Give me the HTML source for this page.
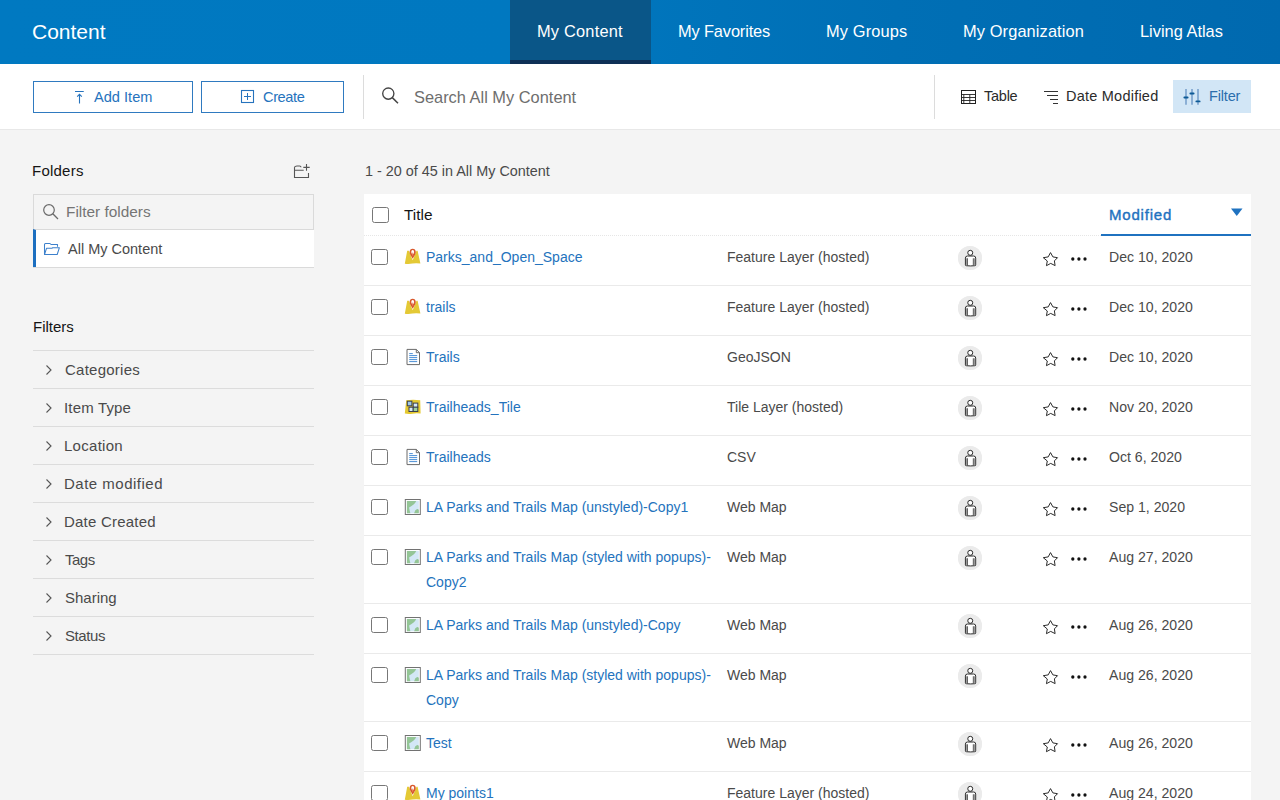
<!DOCTYPE html>
<html><head><meta charset="utf-8">
<style>
*{box-sizing:border-box;margin:0;padding:0}
svg{display:block}
html,body{width:1280px;height:800px;overflow:hidden;background:#f4f4f4;font-family:"Liberation Sans",sans-serif;color:#4a4a4a}
.abs{position:absolute}
#hdr{position:absolute;left:0;top:0;width:1280px;height:64px;background:linear-gradient(90deg,#0079c1 0%,#0078c0 40%,#006fb5 70%,#0069af 100%)}
#hdr .title{position:absolute;left:32px;top:18.7px;font-size:21px;color:#fff;line-height:26px}
.tab{position:absolute;top:0;height:64px;color:#fff;font-size:16.4px;line-height:62px;white-space:nowrap}
.tab.active{background:#0a5688;border-bottom:4px solid #0e3056}
#tb{position:absolute;left:0;top:64px;width:1280px;height:66px;background:#fff;border-bottom:1px solid #e8e8e8}
.btn{position:absolute;top:17px;height:32px;border:1px solid #2f7ac0;color:#2673bd;font-size:14.6px;line-height:30px}
.vdiv{position:absolute;top:11px;width:1px;height:44px;background:#dcdcdc}
.tbtxt{position:absolute;font-size:14.5px;color:#2b2b2b;line-height:18px}
#side{position:absolute;left:33px;top:0}
.sh{position:absolute;font-size:15px;color:#151515;line-height:18px}
.frow{position:absolute;left:33px;width:281px;height:38px;border-bottom:1px solid #dcdcdc}
.frow .lbl{position:absolute;left:32px;top:10px;font-size:15px;color:#4a4a4a;line-height:18px}
.frow svg{position:absolute;left:12px;top:13px}
#tbl{position:absolute;left:364px;top:194px;width:887px;height:620px;background:#fff}
.row{position:absolute;left:0;width:887px;border-bottom:1px solid #eaeaea}
.cb{position:absolute;width:16.5px;height:16px;border:1.3px solid #777;border-radius:2.5px;background:#fff}
.ttl{position:absolute;left:62px;font-size:14px;color:#2473bd;line-height:25px;white-space:nowrap}
.typ{position:absolute;left:363px;font-size:14px;color:#4a4a4a;line-height:18px;white-space:nowrap}
.dt{position:absolute;left:745px;font-size:14.1px;color:#4a4a4a;line-height:18px;white-space:nowrap}
.ico{position:absolute;left:40px}
.share{position:absolute;left:594px;width:24px;height:24px;border-radius:12px;background:#ececec}
.star{position:absolute;left:678px}
.dots{position:absolute;left:707px}
</style></head>
<body>
<div id="hdr">
  <div class="title">Content</div>
  <div class="tab active" style="left:510px;width:141px;padding-left:27px;letter-spacing:0.2px">My Content</div>
  <div class="tab" style="left:678px;letter-spacing:-0.14px">My Favorites</div>
  <div class="tab" style="left:826px;letter-spacing:0.12px">My Groups</div>
  <div class="tab" style="left:963px;letter-spacing:0.11px">My Organization</div>
  <div class="tab" style="left:1140px">Living Atlas</div>
</div>
<div id="tb">
  <div class="btn" style="left:33px;width:160px"><span class="abs" style="left:60px;top:0">Add Item</span></div>
  <div class="btn" style="left:201px;width:143px"><span class="abs" style="left:61px;top:0;letter-spacing:-0.4px">Create</span></div>
  <div class="vdiv" style="left:363px"></div>
  <div class="abs" style="left:414px;top:23px;font-size:16.4px;color:#6e6e6e;line-height:20px">Search All My Content</div>
  <div class="vdiv" style="left:934px"></div>
  <div class="abs" style="left:1173px;top:16px;width:78px;height:33px;background:#d2e6f6"></div>

  
  <svg class="abs" style="left:72px;top:24px" width="16" height="18" viewBox="0 0 16 18"><path d="M3 3.5 H11.75 M7.5 15.6 V6.5 M5.2 8.6 L7.5 6.3 L9.8 8.6" fill="none" stroke="#2673bd" stroke-width="1.1"/></svg>
  <svg class="abs" style="left:238px;top:24px" width="18" height="18" viewBox="0 0 18 18"><rect x="3.5" y="2.5" width="12" height="12" fill="none" stroke="#2673bd" stroke-width="1.1"/><path d="M9.5 5 V12 M6 8.5 H13" stroke="#2673bd" stroke-width="1"/></svg>
  <svg class="abs" style="left:381px;top:22px" width="19" height="19" viewBox="0 0 19 19"><circle cx="7.3" cy="7.6" r="5.6" fill="none" stroke="#444" stroke-width="1.35"/><path d="M11.3 11.6 L17 17.2" stroke="#444" stroke-width="1.5"/></svg>
  <svg class="abs" style="left:960px;top:25px" width="18" height="16" viewBox="0 0 18 16"><rect x="1.5" y="1.5" width="14" height="13" fill="none" stroke="#222" stroke-width="1"/><path d="M1.5 5.5 H15.5 M1.5 8.5 H15.5 M1.5 11.5 H15.5 M3.8 5.5 V14.5 M9.8 5.5 V14.5" stroke="#222" stroke-width="0.9"/></svg>
  <svg class="abs" style="left:1043px;top:25px" width="16" height="16" viewBox="0 0 16 16"><path d="M1 2.5 H15 M4 6.5 H15 M7 10.5 H15 M10 14.5 H15" stroke="#333" stroke-width="1.2"/></svg>
  <svg class="abs" style="left:1183px;top:24px" width="18" height="18" viewBox="0 0 18 18"><path d="M3 1 V16.7 M9 1 V16.7 M15 1 V16.7" stroke="#7fa5cf" stroke-width="1.7"/><path d="M1.4 9.5 H4.6 M7.4 5.5 H10.6 M13.4 13.4 H16.6" stroke="#0d5a96" stroke-width="1.9" stroke-linecap="round"/></svg>
  <div class="tbtxt" style="left:984px;top:23px;letter-spacing:-0.25px">Table</div>
  <div class="tbtxt" style="left:1066px;top:23px;letter-spacing:0.23px">Date Modified</div>
  <div class="tbtxt" style="left:1209px;top:23px;color:#2b6ead;letter-spacing:-0.16px">Filter</div>
</div>

<div class="sh" style="left:32px;top:162px;letter-spacing:0.23px">Folders</div>
<div class="abs" style="left:33px;top:194px;width:281px;height:74px;border:1px solid #dadada;background:#f4f4f4"></div>
<div class="abs" style="left:66px;top:203px;font-size:15.4px;color:#757575;line-height:18px">Filter folders</div>
<div class="abs" style="left:33px;top:229px;width:281px;height:38px;background:#fff;border-left:3px solid #1c6fc0;border-top:1px solid #dadada"></div>
<div class="abs" style="left:68px;top:240px;font-size:14.5px;color:#4a4a4a;line-height:18px">All My Content</div>


<svg class="abs" style="left:292px;top:162px" width="20" height="18" viewBox="0 0 20 18"><path d="M2.5 5.2 V15.5 H16.5 V11 M2.5 8.3 H11.7 M2.5 5.2 Q3 4.3 5 4 H7.6 Q9 4 9 5.2 M14.5 2 V8.7 M11.3 5.4 H17.7" fill="none" stroke="#555" stroke-width="1.1"/></svg>
<svg class="abs" style="left:42px;top:203px" width="18" height="18" viewBox="0 0 18 18"><circle cx="7" cy="7" r="5.3" fill="none" stroke="#6b6b6b" stroke-width="1.2"/><path d="M10.8 10.8 L16 16" stroke="#6b6b6b" stroke-width="1.3"/></svg>
<svg class="abs" style="left:40px;top:240px" width="22" height="18" viewBox="0 0 22 18"><path d="M4.5 14.5 V4.5 Q4.5 3.5 5.5 3.5 H10 L11 4.5 H17.5 V6.7 M4.5 14.5 L6.5 8.3 H12 L12.6 7.7 H19.4 L17.2 14.5 Z" fill="none" stroke="#3c80cc" stroke-width="1.05" stroke-linejoin="round"/></svg>
<div class="sh" style="left:33px;top:318px">Filters</div>
<div class="abs" style="left:33px;top:350px;width:281px;height:1px;background:#dcdcdc"></div>
<div class="frow" style="top:351px"><svg width="8" height="12" viewBox="0 0 8 12"><path d="M1.5 1.5 L6 6 L1.5 10.5" fill="none" stroke="#555" stroke-width="1.1"/></svg><div class="lbl" style="letter-spacing:0.25px">Categories</div></div>
<div class="frow" style="top:389px"><svg width="8" height="12" viewBox="0 0 8 12"><path d="M1.5 1.5 L6 6 L1.5 10.5" fill="none" stroke="#555" stroke-width="1.1"/></svg><div class="lbl" style="letter-spacing:0.17px;left:31px">Item Type</div></div>
<div class="frow" style="top:427px"><svg width="8" height="12" viewBox="0 0 8 12"><path d="M1.5 1.5 L6 6 L1.5 10.5" fill="none" stroke="#555" stroke-width="1.1"/></svg><div class="lbl" style="left:31px;letter-spacing:0.28px">Location</div></div>
<div class="frow" style="top:465px"><svg width="8" height="12" viewBox="0 0 8 12"><path d="M1.5 1.5 L6 6 L1.5 10.5" fill="none" stroke="#555" stroke-width="1.1"/></svg><div class="lbl" style="left:31px;letter-spacing:0.5px">Date modified</div></div>
<div class="frow" style="top:503px"><svg width="8" height="12" viewBox="0 0 8 12"><path d="M1.5 1.5 L6 6 L1.5 10.5" fill="none" stroke="#555" stroke-width="1.1"/></svg><div class="lbl" style="left:31px;letter-spacing:0.22px">Date Created</div></div>
<div class="frow" style="top:541px"><svg width="8" height="12" viewBox="0 0 8 12"><path d="M1.5 1.5 L6 6 L1.5 10.5" fill="none" stroke="#555" stroke-width="1.1"/></svg><div class="lbl" style="letter-spacing:-0.5px">Tags</div></div>
<div class="frow" style="top:579px"><svg width="8" height="12" viewBox="0 0 8 12"><path d="M1.5 1.5 L6 6 L1.5 10.5" fill="none" stroke="#555" stroke-width="1.1"/></svg><div class="lbl">Sharing</div></div>
<div class="frow" style="top:617px"><svg width="8" height="12" viewBox="0 0 8 12"><path d="M1.5 1.5 L6 6 L1.5 10.5" fill="none" stroke="#555" stroke-width="1.1"/></svg><div class="lbl" style="letter-spacing:-0.4px">Status</div></div>

<div class="abs" style="left:365px;top:162px;font-size:14.4px;color:#4a4a4a;line-height:18px">1 - 20 of 45 in All My Content</div>

<div id="tbl"><!--TBL--><div class="row" style="top:0;height:42px;border-bottom:1px dotted #e6e6e6"><div class="cb" style="left:8px;top:13px"></div><div class="abs" style="left:40px;top:12px;font-size:15.4px;color:#151515;line-height:18px">Title</div><div class="abs" style="left:737px;top:40px;width:150px;height:2px;background:#1f72c0"></div><div class="abs" style="left:745px;top:11.5px;font-size:15px;color:#1f72c0;line-height:18px;letter-spacing:0.8px;-webkit-text-stroke:0.4px #1f72c0">Modified</div><svg class="abs" style="left:867px;top:14px" width="12" height="9" viewBox="0 0 12 9"><path d="M0 0.5 H11.5 L5.75 8 Z" fill="#1f72c0"/></svg></div>
<div class="row" style="top:42px;height:50px"><div class="cb" style="left:7.3px;top:13px"></div><div class="ico" style="top:12px"><svg width="18" height="18" viewBox="0 0 18 18"><path d="M3.2 2.7 L4.9 2.7 L8.7 12.3 L12.5 2.7 L13.6 2.7 L16.4 15.6 Q12 14.8 8.5 15.6 Q4.5 16.4 0.8 15.7 Z" fill="#e4c935"/><path d="M8.7 0.7 C6.9 0.7 5.6 1.9 5.6 4.1 C5.6 6.4 7.4 8.4 8.7 10.8 C10 8.4 11.8 6.4 11.8 4.1 C11.8 1.9 10.5 0.7 8.7 0.7 Z" fill="#d9582c"/><ellipse cx="8.7" cy="4.1" rx="1.45" ry="2.1" fill="#fff"/><path d="M8.7 4.6 V7.6" stroke="#e88a6a" stroke-width="1"/></svg></div><div class="ttl" style="top:9px">Parks_and_Open_Space</div><div class="typ" style="top:12px">Feature Layer (hosted)</div><div class="share" style="top:10px"><svg width="24" height="24" viewBox="0 0 24 24"><circle cx="12" cy="12" r="12" fill="#ebebeb"/><circle cx="12.25" cy="6.8" r="2.5" fill="#fff" stroke="#2b2b2b" stroke-width="1"/><path d="M7.4 18.9 V12.1 Q7.4 10 9.5 10 H15.6 Q17.7 10 17.7 12.1 V18.9 Q17.7 19.7 16.9 19.7 Q12.5 20.2 8.2 19.7 Q7.4 19.7 7.4 18.9 Z" fill="#fff" stroke="#2b2b2b" stroke-width="1"/><path d="M8 12.3 H9.3 V19.2 H8 Z M15.5 12.3 H17.1 V19.2 H15.5 Z" fill="#9a9a9a"/><path d="M9.5 12.3 V19.3 M15.3 12.3 V19.3" stroke="#2b2b2b" stroke-width="0.7"/></svg></div><div class="star" style="top:13.7px"><svg width="18" height="18" viewBox="0 0 18 18"><path d="M8.5 2.6 L10.9 6.9 L15.5 7.7 L12.4 10.9 L13.1 15.6 L8.7 13.4 L4.45 15.7 L5.3 11 L1.3 7.7 L6.2 6.9 Z" fill="none" stroke="#2b2b2b" stroke-width="1" stroke-linejoin="miter"/></svg></div><div class="dots" style="top:20px"><svg width="18" height="6" viewBox="0 0 18 6"><circle cx="1.8" cy="3" r="1.65" fill="#111"/><circle cx="7.9" cy="3" r="1.65" fill="#111"/><circle cx="14" cy="3" r="1.65" fill="#111"/></svg></div><div class="dt" style="top:12px">Dec 10, 2020</div></div>
<div class="row" style="top:92px;height:50px"><div class="cb" style="left:7.3px;top:13px"></div><div class="ico" style="top:12px"><svg width="18" height="18" viewBox="0 0 18 18"><path d="M3.2 2.7 L4.9 2.7 L8.7 12.3 L12.5 2.7 L13.6 2.7 L16.4 15.6 Q12 14.8 8.5 15.6 Q4.5 16.4 0.8 15.7 Z" fill="#e4c935"/><path d="M8.7 0.7 C6.9 0.7 5.6 1.9 5.6 4.1 C5.6 6.4 7.4 8.4 8.7 10.8 C10 8.4 11.8 6.4 11.8 4.1 C11.8 1.9 10.5 0.7 8.7 0.7 Z" fill="#d9582c"/><ellipse cx="8.7" cy="4.1" rx="1.45" ry="2.1" fill="#fff"/><path d="M8.7 4.6 V7.6" stroke="#e88a6a" stroke-width="1"/></svg></div><div class="ttl" style="top:9px">trails</div><div class="typ" style="top:12px">Feature Layer (hosted)</div><div class="share" style="top:10px"><svg width="24" height="24" viewBox="0 0 24 24"><circle cx="12" cy="12" r="12" fill="#ebebeb"/><circle cx="12.25" cy="6.8" r="2.5" fill="#fff" stroke="#2b2b2b" stroke-width="1"/><path d="M7.4 18.9 V12.1 Q7.4 10 9.5 10 H15.6 Q17.7 10 17.7 12.1 V18.9 Q17.7 19.7 16.9 19.7 Q12.5 20.2 8.2 19.7 Q7.4 19.7 7.4 18.9 Z" fill="#fff" stroke="#2b2b2b" stroke-width="1"/><path d="M8 12.3 H9.3 V19.2 H8 Z M15.5 12.3 H17.1 V19.2 H15.5 Z" fill="#9a9a9a"/><path d="M9.5 12.3 V19.3 M15.3 12.3 V19.3" stroke="#2b2b2b" stroke-width="0.7"/></svg></div><div class="star" style="top:13.7px"><svg width="18" height="18" viewBox="0 0 18 18"><path d="M8.5 2.6 L10.9 6.9 L15.5 7.7 L12.4 10.9 L13.1 15.6 L8.7 13.4 L4.45 15.7 L5.3 11 L1.3 7.7 L6.2 6.9 Z" fill="none" stroke="#2b2b2b" stroke-width="1" stroke-linejoin="miter"/></svg></div><div class="dots" style="top:20px"><svg width="18" height="6" viewBox="0 0 18 6"><circle cx="1.8" cy="3" r="1.65" fill="#111"/><circle cx="7.9" cy="3" r="1.65" fill="#111"/><circle cx="14" cy="3" r="1.65" fill="#111"/></svg></div><div class="dt" style="top:12px">Dec 10, 2020</div></div>
<div class="row" style="top:142px;height:50px"><div class="cb" style="left:7.3px;top:13px"></div><div class="ico" style="top:12px"><svg width="18" height="18" viewBox="0 0 18 18"><path d="M3 1.4 H12.3 L15.5 4.7 V16.6 H3 Z" fill="#fff" stroke="#6b6b6b" stroke-width="1"/><path d="M12.3 1.4 V4.7 H15.5" fill="none" stroke="#6b6b6b" stroke-width="1"/><path d="M5.2 5.6 H8.8 M5.2 7.6 H13.2 M5.2 9.6 H13.2 M5.2 11.6 H13.2 M5.2 13.6 H13.2" stroke="#4b8fd6" stroke-width="1"/></svg></div><div class="ttl" style="top:9px">Trails</div><div class="typ" style="top:12px">GeoJSON</div><div class="share" style="top:10px"><svg width="24" height="24" viewBox="0 0 24 24"><circle cx="12" cy="12" r="12" fill="#ebebeb"/><circle cx="12.25" cy="6.8" r="2.5" fill="#fff" stroke="#2b2b2b" stroke-width="1"/><path d="M7.4 18.9 V12.1 Q7.4 10 9.5 10 H15.6 Q17.7 10 17.7 12.1 V18.9 Q17.7 19.7 16.9 19.7 Q12.5 20.2 8.2 19.7 Q7.4 19.7 7.4 18.9 Z" fill="#fff" stroke="#2b2b2b" stroke-width="1"/><path d="M8 12.3 H9.3 V19.2 H8 Z M15.5 12.3 H17.1 V19.2 H15.5 Z" fill="#9a9a9a"/><path d="M9.5 12.3 V19.3 M15.3 12.3 V19.3" stroke="#2b2b2b" stroke-width="0.7"/></svg></div><div class="star" style="top:13.7px"><svg width="18" height="18" viewBox="0 0 18 18"><path d="M8.5 2.6 L10.9 6.9 L15.5 7.7 L12.4 10.9 L13.1 15.6 L8.7 13.4 L4.45 15.7 L5.3 11 L1.3 7.7 L6.2 6.9 Z" fill="none" stroke="#2b2b2b" stroke-width="1" stroke-linejoin="miter"/></svg></div><div class="dots" style="top:20px"><svg width="18" height="6" viewBox="0 0 18 6"><circle cx="1.8" cy="3" r="1.65" fill="#111"/><circle cx="7.9" cy="3" r="1.65" fill="#111"/><circle cx="14" cy="3" r="1.65" fill="#111"/></svg></div><div class="dt" style="top:12px">Dec 10, 2020</div></div>
<div class="row" style="top:192px;height:50px"><div class="cb" style="left:7.3px;top:13px"></div><div class="ico" style="top:12px"><svg width="18" height="18" viewBox="0 0 18 18"><path d="M2.2 2.3 Q9 1.2 16.2 2.3 L16.6 15.6 Q12 14.9 8.5 15.7 Q4.5 16.3 0.8 15.6 Z" fill="#e5c930"/><rect x="3.3" y="3.2" width="4.6" height="4.6" fill="#9fc8e8" stroke="#3b3f50" stroke-width="1"/><rect x="9.2" y="5.1" width="4.6" height="4.2" fill="#d5e8f7" stroke="#3b3f50" stroke-width="1"/><rect x="5" y="9.2" width="4.2" height="4.3" fill="#d5e8f7" stroke="#3b3f50" stroke-width="1"/><rect x="9.2" y="9.2" width="4.6" height="4.3" fill="#9fd09a" stroke="#3b3f50" stroke-width="1"/></svg></div><div class="ttl" style="top:9px">Trailheads_Tile</div><div class="typ" style="top:12px">Tile Layer (hosted)</div><div class="share" style="top:10px"><svg width="24" height="24" viewBox="0 0 24 24"><circle cx="12" cy="12" r="12" fill="#ebebeb"/><circle cx="12.25" cy="6.8" r="2.5" fill="#fff" stroke="#2b2b2b" stroke-width="1"/><path d="M7.4 18.9 V12.1 Q7.4 10 9.5 10 H15.6 Q17.7 10 17.7 12.1 V18.9 Q17.7 19.7 16.9 19.7 Q12.5 20.2 8.2 19.7 Q7.4 19.7 7.4 18.9 Z" fill="#fff" stroke="#2b2b2b" stroke-width="1"/><path d="M8 12.3 H9.3 V19.2 H8 Z M15.5 12.3 H17.1 V19.2 H15.5 Z" fill="#9a9a9a"/><path d="M9.5 12.3 V19.3 M15.3 12.3 V19.3" stroke="#2b2b2b" stroke-width="0.7"/></svg></div><div class="star" style="top:13.7px"><svg width="18" height="18" viewBox="0 0 18 18"><path d="M8.5 2.6 L10.9 6.9 L15.5 7.7 L12.4 10.9 L13.1 15.6 L8.7 13.4 L4.45 15.7 L5.3 11 L1.3 7.7 L6.2 6.9 Z" fill="none" stroke="#2b2b2b" stroke-width="1" stroke-linejoin="miter"/></svg></div><div class="dots" style="top:20px"><svg width="18" height="6" viewBox="0 0 18 6"><circle cx="1.8" cy="3" r="1.65" fill="#111"/><circle cx="7.9" cy="3" r="1.65" fill="#111"/><circle cx="14" cy="3" r="1.65" fill="#111"/></svg></div><div class="dt" style="top:12px">Nov 20, 2020</div></div>
<div class="row" style="top:242px;height:50px"><div class="cb" style="left:7.3px;top:13px"></div><div class="ico" style="top:12px"><svg width="18" height="18" viewBox="0 0 18 18"><path d="M3 1.4 H12.3 L15.5 4.7 V16.6 H3 Z" fill="#fff" stroke="#6b6b6b" stroke-width="1"/><path d="M12.3 1.4 V4.7 H15.5" fill="none" stroke="#6b6b6b" stroke-width="1"/><path d="M5.2 5.6 H8.8 M5.2 7.6 H13.2 M5.2 9.6 H13.2 M5.2 11.6 H13.2 M5.2 13.6 H13.2" stroke="#4b8fd6" stroke-width="1"/></svg></div><div class="ttl" style="top:9px">Trailheads</div><div class="typ" style="top:12px">CSV</div><div class="share" style="top:10px"><svg width="24" height="24" viewBox="0 0 24 24"><circle cx="12" cy="12" r="12" fill="#ebebeb"/><circle cx="12.25" cy="6.8" r="2.5" fill="#fff" stroke="#2b2b2b" stroke-width="1"/><path d="M7.4 18.9 V12.1 Q7.4 10 9.5 10 H15.6 Q17.7 10 17.7 12.1 V18.9 Q17.7 19.7 16.9 19.7 Q12.5 20.2 8.2 19.7 Q7.4 19.7 7.4 18.9 Z" fill="#fff" stroke="#2b2b2b" stroke-width="1"/><path d="M8 12.3 H9.3 V19.2 H8 Z M15.5 12.3 H17.1 V19.2 H15.5 Z" fill="#9a9a9a"/><path d="M9.5 12.3 V19.3 M15.3 12.3 V19.3" stroke="#2b2b2b" stroke-width="0.7"/></svg></div><div class="star" style="top:13.7px"><svg width="18" height="18" viewBox="0 0 18 18"><path d="M8.5 2.6 L10.9 6.9 L15.5 7.7 L12.4 10.9 L13.1 15.6 L8.7 13.4 L4.45 15.7 L5.3 11 L1.3 7.7 L6.2 6.9 Z" fill="none" stroke="#2b2b2b" stroke-width="1" stroke-linejoin="miter"/></svg></div><div class="dots" style="top:20px"><svg width="18" height="6" viewBox="0 0 18 6"><circle cx="1.8" cy="3" r="1.65" fill="#111"/><circle cx="7.9" cy="3" r="1.65" fill="#111"/><circle cx="14" cy="3" r="1.65" fill="#111"/></svg></div><div class="dt" style="top:12px">Oct 6, 2020</div></div>
<div class="row" style="top:292px;height:50px"><div class="cb" style="left:7.3px;top:13px"></div><div class="ico" style="top:12px"><svg width="18" height="18" viewBox="0 0 18 18"><rect x="1.3" y="1.5" width="15" height="15" fill="#fff" stroke="#727272" stroke-width="1"/><rect x="2.9" y="2.9" width="11.9" height="12.3" fill="#d3e7f6"/><path d="M2.9 2.9 H12.2 Q11.2 5.2 9.6 6.6 Q7 8.4 5.1 9.6 Q5.5 12.5 6.4 15.2 H2.9 Z" fill="#94c596"/><path d="M10.1 15.2 Q11 11.6 13.2 11 Q14.4 11.1 14.8 12 V15.2 Z" fill="#94c596"/></svg></div><div class="ttl" style="top:9px">LA Parks and Trails Map (unstyled)-Copy1</div><div class="typ" style="top:12px">Web Map</div><div class="share" style="top:10px"><svg width="24" height="24" viewBox="0 0 24 24"><circle cx="12" cy="12" r="12" fill="#ebebeb"/><circle cx="12.25" cy="6.8" r="2.5" fill="#fff" stroke="#2b2b2b" stroke-width="1"/><path d="M7.4 18.9 V12.1 Q7.4 10 9.5 10 H15.6 Q17.7 10 17.7 12.1 V18.9 Q17.7 19.7 16.9 19.7 Q12.5 20.2 8.2 19.7 Q7.4 19.7 7.4 18.9 Z" fill="#fff" stroke="#2b2b2b" stroke-width="1"/><path d="M8 12.3 H9.3 V19.2 H8 Z M15.5 12.3 H17.1 V19.2 H15.5 Z" fill="#9a9a9a"/><path d="M9.5 12.3 V19.3 M15.3 12.3 V19.3" stroke="#2b2b2b" stroke-width="0.7"/></svg></div><div class="star" style="top:13.7px"><svg width="18" height="18" viewBox="0 0 18 18"><path d="M8.5 2.6 L10.9 6.9 L15.5 7.7 L12.4 10.9 L13.1 15.6 L8.7 13.4 L4.45 15.7 L5.3 11 L1.3 7.7 L6.2 6.9 Z" fill="none" stroke="#2b2b2b" stroke-width="1" stroke-linejoin="miter"/></svg></div><div class="dots" style="top:20px"><svg width="18" height="6" viewBox="0 0 18 6"><circle cx="1.8" cy="3" r="1.65" fill="#111"/><circle cx="7.9" cy="3" r="1.65" fill="#111"/><circle cx="14" cy="3" r="1.65" fill="#111"/></svg></div><div class="dt" style="top:12px">Sep 1, 2020</div></div>
<div class="row" style="top:342px;height:68px"><div class="cb" style="left:7.3px;top:13px"></div><div class="ico" style="top:12px"><svg width="18" height="18" viewBox="0 0 18 18"><rect x="1.3" y="1.5" width="15" height="15" fill="#fff" stroke="#727272" stroke-width="1"/><rect x="2.9" y="2.9" width="11.9" height="12.3" fill="#d3e7f6"/><path d="M2.9 2.9 H12.2 Q11.2 5.2 9.6 6.6 Q7 8.4 5.1 9.6 Q5.5 12.5 6.4 15.2 H2.9 Z" fill="#94c596"/><path d="M10.1 15.2 Q11 11.6 13.2 11 Q14.4 11.1 14.8 12 V15.2 Z" fill="#94c596"/></svg></div><div class="ttl" style="top:9px">LA Parks and Trails Map (styled with popups)-<br>Copy2</div><div class="typ" style="top:12px">Web Map</div><div class="share" style="top:10px"><svg width="24" height="24" viewBox="0 0 24 24"><circle cx="12" cy="12" r="12" fill="#ebebeb"/><circle cx="12.25" cy="6.8" r="2.5" fill="#fff" stroke="#2b2b2b" stroke-width="1"/><path d="M7.4 18.9 V12.1 Q7.4 10 9.5 10 H15.6 Q17.7 10 17.7 12.1 V18.9 Q17.7 19.7 16.9 19.7 Q12.5 20.2 8.2 19.7 Q7.4 19.7 7.4 18.9 Z" fill="#fff" stroke="#2b2b2b" stroke-width="1"/><path d="M8 12.3 H9.3 V19.2 H8 Z M15.5 12.3 H17.1 V19.2 H15.5 Z" fill="#9a9a9a"/><path d="M9.5 12.3 V19.3 M15.3 12.3 V19.3" stroke="#2b2b2b" stroke-width="0.7"/></svg></div><div class="star" style="top:13.7px"><svg width="18" height="18" viewBox="0 0 18 18"><path d="M8.5 2.6 L10.9 6.9 L15.5 7.7 L12.4 10.9 L13.1 15.6 L8.7 13.4 L4.45 15.7 L5.3 11 L1.3 7.7 L6.2 6.9 Z" fill="none" stroke="#2b2b2b" stroke-width="1" stroke-linejoin="miter"/></svg></div><div class="dots" style="top:20px"><svg width="18" height="6" viewBox="0 0 18 6"><circle cx="1.8" cy="3" r="1.65" fill="#111"/><circle cx="7.9" cy="3" r="1.65" fill="#111"/><circle cx="14" cy="3" r="1.65" fill="#111"/></svg></div><div class="dt" style="top:12px">Aug 27, 2020</div></div>
<div class="row" style="top:410px;height:50px"><div class="cb" style="left:7.3px;top:13px"></div><div class="ico" style="top:12px"><svg width="18" height="18" viewBox="0 0 18 18"><rect x="1.3" y="1.5" width="15" height="15" fill="#fff" stroke="#727272" stroke-width="1"/><rect x="2.9" y="2.9" width="11.9" height="12.3" fill="#d3e7f6"/><path d="M2.9 2.9 H12.2 Q11.2 5.2 9.6 6.6 Q7 8.4 5.1 9.6 Q5.5 12.5 6.4 15.2 H2.9 Z" fill="#94c596"/><path d="M10.1 15.2 Q11 11.6 13.2 11 Q14.4 11.1 14.8 12 V15.2 Z" fill="#94c596"/></svg></div><div class="ttl" style="top:9px">LA Parks and Trails Map (unstyled)-Copy</div><div class="typ" style="top:12px">Web Map</div><div class="share" style="top:10px"><svg width="24" height="24" viewBox="0 0 24 24"><circle cx="12" cy="12" r="12" fill="#ebebeb"/><circle cx="12.25" cy="6.8" r="2.5" fill="#fff" stroke="#2b2b2b" stroke-width="1"/><path d="M7.4 18.9 V12.1 Q7.4 10 9.5 10 H15.6 Q17.7 10 17.7 12.1 V18.9 Q17.7 19.7 16.9 19.7 Q12.5 20.2 8.2 19.7 Q7.4 19.7 7.4 18.9 Z" fill="#fff" stroke="#2b2b2b" stroke-width="1"/><path d="M8 12.3 H9.3 V19.2 H8 Z M15.5 12.3 H17.1 V19.2 H15.5 Z" fill="#9a9a9a"/><path d="M9.5 12.3 V19.3 M15.3 12.3 V19.3" stroke="#2b2b2b" stroke-width="0.7"/></svg></div><div class="star" style="top:13.7px"><svg width="18" height="18" viewBox="0 0 18 18"><path d="M8.5 2.6 L10.9 6.9 L15.5 7.7 L12.4 10.9 L13.1 15.6 L8.7 13.4 L4.45 15.7 L5.3 11 L1.3 7.7 L6.2 6.9 Z" fill="none" stroke="#2b2b2b" stroke-width="1" stroke-linejoin="miter"/></svg></div><div class="dots" style="top:20px"><svg width="18" height="6" viewBox="0 0 18 6"><circle cx="1.8" cy="3" r="1.65" fill="#111"/><circle cx="7.9" cy="3" r="1.65" fill="#111"/><circle cx="14" cy="3" r="1.65" fill="#111"/></svg></div><div class="dt" style="top:12px">Aug 26, 2020</div></div>
<div class="row" style="top:460px;height:68px"><div class="cb" style="left:7.3px;top:13px"></div><div class="ico" style="top:12px"><svg width="18" height="18" viewBox="0 0 18 18"><rect x="1.3" y="1.5" width="15" height="15" fill="#fff" stroke="#727272" stroke-width="1"/><rect x="2.9" y="2.9" width="11.9" height="12.3" fill="#d3e7f6"/><path d="M2.9 2.9 H12.2 Q11.2 5.2 9.6 6.6 Q7 8.4 5.1 9.6 Q5.5 12.5 6.4 15.2 H2.9 Z" fill="#94c596"/><path d="M10.1 15.2 Q11 11.6 13.2 11 Q14.4 11.1 14.8 12 V15.2 Z" fill="#94c596"/></svg></div><div class="ttl" style="top:9px">LA Parks and Trails Map (styled with popups)-<br>Copy</div><div class="typ" style="top:12px">Web Map</div><div class="share" style="top:10px"><svg width="24" height="24" viewBox="0 0 24 24"><circle cx="12" cy="12" r="12" fill="#ebebeb"/><circle cx="12.25" cy="6.8" r="2.5" fill="#fff" stroke="#2b2b2b" stroke-width="1"/><path d="M7.4 18.9 V12.1 Q7.4 10 9.5 10 H15.6 Q17.7 10 17.7 12.1 V18.9 Q17.7 19.7 16.9 19.7 Q12.5 20.2 8.2 19.7 Q7.4 19.7 7.4 18.9 Z" fill="#fff" stroke="#2b2b2b" stroke-width="1"/><path d="M8 12.3 H9.3 V19.2 H8 Z M15.5 12.3 H17.1 V19.2 H15.5 Z" fill="#9a9a9a"/><path d="M9.5 12.3 V19.3 M15.3 12.3 V19.3" stroke="#2b2b2b" stroke-width="0.7"/></svg></div><div class="star" style="top:13.7px"><svg width="18" height="18" viewBox="0 0 18 18"><path d="M8.5 2.6 L10.9 6.9 L15.5 7.7 L12.4 10.9 L13.1 15.6 L8.7 13.4 L4.45 15.7 L5.3 11 L1.3 7.7 L6.2 6.9 Z" fill="none" stroke="#2b2b2b" stroke-width="1" stroke-linejoin="miter"/></svg></div><div class="dots" style="top:20px"><svg width="18" height="6" viewBox="0 0 18 6"><circle cx="1.8" cy="3" r="1.65" fill="#111"/><circle cx="7.9" cy="3" r="1.65" fill="#111"/><circle cx="14" cy="3" r="1.65" fill="#111"/></svg></div><div class="dt" style="top:12px">Aug 26, 2020</div></div>
<div class="row" style="top:528px;height:50px"><div class="cb" style="left:7.3px;top:13px"></div><div class="ico" style="top:12px"><svg width="18" height="18" viewBox="0 0 18 18"><rect x="1.3" y="1.5" width="15" height="15" fill="#fff" stroke="#727272" stroke-width="1"/><rect x="2.9" y="2.9" width="11.9" height="12.3" fill="#d3e7f6"/><path d="M2.9 2.9 H12.2 Q11.2 5.2 9.6 6.6 Q7 8.4 5.1 9.6 Q5.5 12.5 6.4 15.2 H2.9 Z" fill="#94c596"/><path d="M10.1 15.2 Q11 11.6 13.2 11 Q14.4 11.1 14.8 12 V15.2 Z" fill="#94c596"/></svg></div><div class="ttl" style="top:9px">Test</div><div class="typ" style="top:12px">Web Map</div><div class="share" style="top:10px"><svg width="24" height="24" viewBox="0 0 24 24"><circle cx="12" cy="12" r="12" fill="#ebebeb"/><circle cx="12.25" cy="6.8" r="2.5" fill="#fff" stroke="#2b2b2b" stroke-width="1"/><path d="M7.4 18.9 V12.1 Q7.4 10 9.5 10 H15.6 Q17.7 10 17.7 12.1 V18.9 Q17.7 19.7 16.9 19.7 Q12.5 20.2 8.2 19.7 Q7.4 19.7 7.4 18.9 Z" fill="#fff" stroke="#2b2b2b" stroke-width="1"/><path d="M8 12.3 H9.3 V19.2 H8 Z M15.5 12.3 H17.1 V19.2 H15.5 Z" fill="#9a9a9a"/><path d="M9.5 12.3 V19.3 M15.3 12.3 V19.3" stroke="#2b2b2b" stroke-width="0.7"/></svg></div><div class="star" style="top:13.7px"><svg width="18" height="18" viewBox="0 0 18 18"><path d="M8.5 2.6 L10.9 6.9 L15.5 7.7 L12.4 10.9 L13.1 15.6 L8.7 13.4 L4.45 15.7 L5.3 11 L1.3 7.7 L6.2 6.9 Z" fill="none" stroke="#2b2b2b" stroke-width="1" stroke-linejoin="miter"/></svg></div><div class="dots" style="top:20px"><svg width="18" height="6" viewBox="0 0 18 6"><circle cx="1.8" cy="3" r="1.65" fill="#111"/><circle cx="7.9" cy="3" r="1.65" fill="#111"/><circle cx="14" cy="3" r="1.65" fill="#111"/></svg></div><div class="dt" style="top:12px">Aug 26, 2020</div></div>
<div class="row" style="top:578px;height:50px"><div class="cb" style="left:7.3px;top:13px"></div><div class="ico" style="top:12px"><svg width="18" height="18" viewBox="0 0 18 18"><path d="M3.2 2.7 L4.9 2.7 L8.7 12.3 L12.5 2.7 L13.6 2.7 L16.4 15.6 Q12 14.8 8.5 15.6 Q4.5 16.4 0.8 15.7 Z" fill="#e4c935"/><path d="M8.7 0.7 C6.9 0.7 5.6 1.9 5.6 4.1 C5.6 6.4 7.4 8.4 8.7 10.8 C10 8.4 11.8 6.4 11.8 4.1 C11.8 1.9 10.5 0.7 8.7 0.7 Z" fill="#d9582c"/><ellipse cx="8.7" cy="4.1" rx="1.45" ry="2.1" fill="#fff"/><path d="M8.7 4.6 V7.6" stroke="#e88a6a" stroke-width="1"/></svg></div><div class="ttl" style="top:9px">My points1</div><div class="typ" style="top:12px">Feature Layer (hosted)</div><div class="share" style="top:10px"><svg width="24" height="24" viewBox="0 0 24 24"><circle cx="12" cy="12" r="12" fill="#ebebeb"/><circle cx="12.25" cy="6.8" r="2.5" fill="#fff" stroke="#2b2b2b" stroke-width="1"/><path d="M7.4 18.9 V12.1 Q7.4 10 9.5 10 H15.6 Q17.7 10 17.7 12.1 V18.9 Q17.7 19.7 16.9 19.7 Q12.5 20.2 8.2 19.7 Q7.4 19.7 7.4 18.9 Z" fill="#fff" stroke="#2b2b2b" stroke-width="1"/><path d="M8 12.3 H9.3 V19.2 H8 Z M15.5 12.3 H17.1 V19.2 H15.5 Z" fill="#9a9a9a"/><path d="M9.5 12.3 V19.3 M15.3 12.3 V19.3" stroke="#2b2b2b" stroke-width="0.7"/></svg></div><div class="star" style="top:13.7px"><svg width="18" height="18" viewBox="0 0 18 18"><path d="M8.5 2.6 L10.9 6.9 L15.5 7.7 L12.4 10.9 L13.1 15.6 L8.7 13.4 L4.45 15.7 L5.3 11 L1.3 7.7 L6.2 6.9 Z" fill="none" stroke="#2b2b2b" stroke-width="1" stroke-linejoin="miter"/></svg></div><div class="dots" style="top:20px"><svg width="18" height="6" viewBox="0 0 18 6"><circle cx="1.8" cy="3" r="1.65" fill="#111"/><circle cx="7.9" cy="3" r="1.65" fill="#111"/><circle cx="14" cy="3" r="1.65" fill="#111"/></svg></div><div class="dt" style="top:12px">Aug 24, 2020</div></div><!--/TBL--></div>
</body></html>
